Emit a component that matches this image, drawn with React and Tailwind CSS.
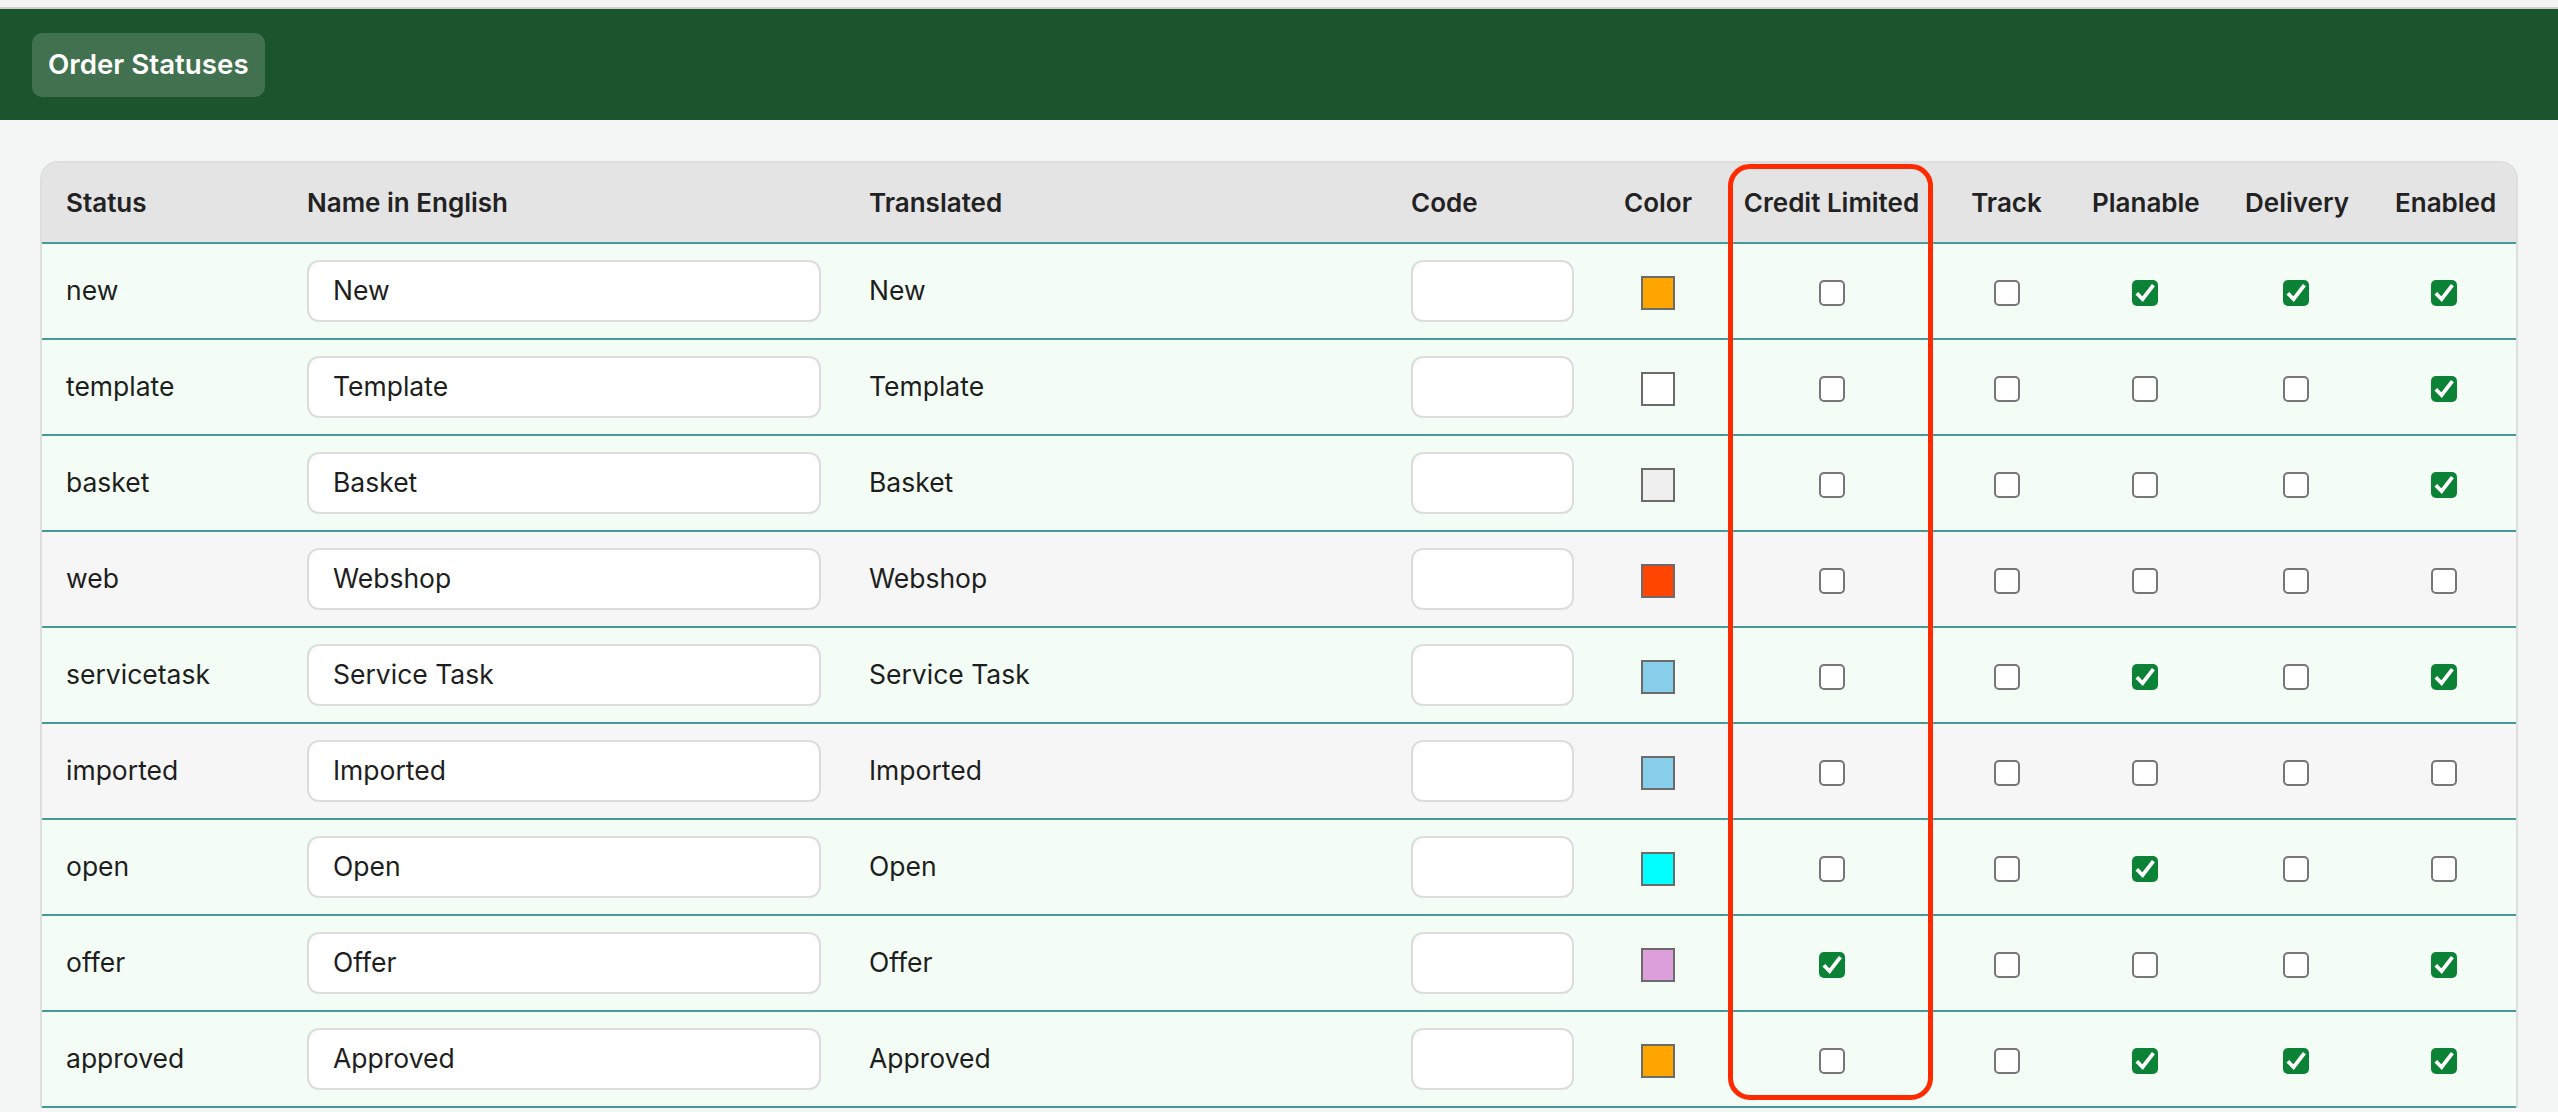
import React from "react";

const STATUSES = [
  { key: "new", name: "New", color: "#ffa500", gray: false, flags: [false, false, true, true, true] },
  { key: "template", name: "Template", color: "#ffffff", gray: false, flags: [false, false, false, false, true] },
  { key: "basket", name: "Basket", color: "#efefef", gray: false, flags: [false, false, false, false, true] },
  { key: "web", name: "Webshop", color: "#ff4500", gray: true, flags: [false, false, false, false, false] },
  { key: "servicetask", name: "Service Task", color: "#87ceeb", gray: false, flags: [false, false, true, false, true] },
  { key: "imported", name: "Imported", color: "#87ceeb", gray: true, flags: [false, false, false, false, false] },
  { key: "open", name: "Open", color: "#00ffff", gray: false, flags: [false, false, true, false, false] },
  { key: "offer", name: "Offer", color: "#dda0dd", gray: false, flags: [true, false, false, false, true] },
  { key: "approved", name: "Approved", color: "#ffa500", gray: false, flags: [false, false, true, true, true] },
];

function Check({ checked }) {
  if (checked) {
    return (
      <span className="inline-flex h-[26px] w-[26px] items-center justify-center rounded-[5px] bg-[#0c8236] align-middle">
        <svg width="26" height="26" viewBox="0 0 26 26" fill="none">
          <path d="M4.8 13.2 L10.6 19.2 L21.4 5.2" stroke="#ffffff" strokeWidth="3.8" strokeLinejoin="miter" />
        </svg>
      </span>
    );
  }
  return (
    <span className="inline-block h-[26px] w-[26px] rounded-[5px] border-2 border-[#767676] bg-white align-middle" />
  );
}

function TextBox({ value, width }) {
  return (
    <div
      className={`flex h-[62px] items-center rounded-[12px] border-2 border-[#dcdcdc] bg-white px-[24px] text-[26.5px] text-[#1e1e1e] ${width}`}
    >
      {value}
    </div>
  );
}

const th = "border-b-2 border-[#469b97] px-[24px] py-[22px] text-[26px] leading-[35px] font-semibold text-[#222222]";
const td = "border-b-2 border-[#469b97] px-[24px] py-[16px] text-[26.5px] text-[#1e1e1e] align-middle";

export default function App() {
  return (
    <div className="min-h-screen bg-[#f4f6f5]" style={{ fontFamily: "Inter, 'Noto Sans', sans-serif" }}>
      <div className="h-[9px] bg-[#f4f4f4] border-b-2 border-[#cfcfcf]" />
      <header className="flex h-[111px] items-center bg-[#1a552d] px-[32px]">
        <div className="flex h-[64px] items-center rounded-[10px] bg-[#41714f] px-[16px] text-[27.7px] font-semibold text-white">
          Order Statuses
        </div>
      </header>

      <main className="px-[40px] pt-[41px]">
        <div className="relative">
          <div className="overflow-hidden rounded-t-[18px] border-2 border-b-0 border-[#dedede]">
            <table className="w-full table-fixed border-separate border-spacing-0">
              <colgroup>
                <col className="w-[241px]" />
                <col className="w-[562px]" />
                <col className="w-[542px]" />
                <col className="w-[211px]" />
                <col className="w-[120px]" />
                <col className="w-[227px]" />
                <col className="w-[123px]" />
                <col className="w-[153px]" />
                <col className="w-[150px]" />
                <col className="w-[145px]" />
              </colgroup>
              <thead className="bg-[#e4e4e4]">
                <tr>
                  <th className={`${th} text-left`}>Status</th>
                  <th className={`${th} text-left`}>Name in English</th>
                  <th className={`${th} text-left`}>Translated</th>
                  <th className={`${th} text-left`}>Code</th>
                  <th className={`${th} text-center`}>Color</th>
                  <th className={`${th} text-center whitespace-nowrap px-[12px]`}>Credit Limited</th>
                  <th className={`${th} text-center`}>Track</th>
                  <th className={`${th} text-center`}>Planable</th>
                  <th className={`${th} text-center`}>Delivery</th>
                  <th className={`${th} text-center`}>Enabled</th>
                </tr>
              </thead>
              <tbody>
                {STATUSES.map((s) => (
                  <tr key={s.key} className={s.gray ? "bg-[#f6f6f6]" : "bg-[#f3fdf5]"}>
                    <td className={td}>{s.key}</td>
                    <td className={td}>
                      <TextBox value={s.name} width="w-[514px]" />
                    </td>
                    <td className={td}>{s.name}</td>
                    <td className={td}>
                      <TextBox value="" width="w-[163px]" />
                    </td>
                    <td className={`${td} text-center`}>
                      <span
                        className="inline-block h-[34px] w-[34px] border-2 border-[#6b6b6b] align-middle"
                        style={{ backgroundColor: s.color }}
                      />
                    </td>
                    {s.flags.map((f, i) => (
                      <td key={i} className={`${td} text-center`}>
                        <Check checked={f} />
                      </td>
                    ))}
                  </tr>
                ))}
              </tbody>
            </table>
          </div>

          {/* highlight around the Credit Limited column */}
          <div className="pointer-events-none absolute left-[1688px] top-[3px] h-[936px] w-[205px] rounded-[22px] border-[5px] border-[#ff2a00]" />
        </div>
      </main>
    </div>
  );
}
